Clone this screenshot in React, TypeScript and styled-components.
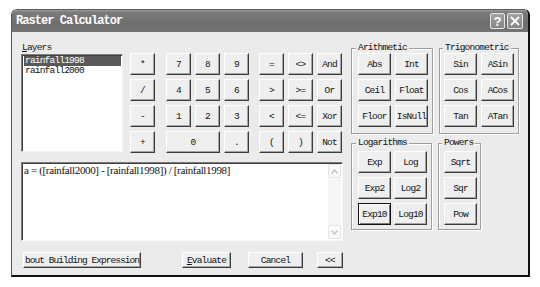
import React from "react";
import styled, { createGlobalStyle, css } from "styled-components";

const mono = `"Liberation Mono", "DejaVu Sans Mono", monospace`;

const Global = createGlobalStyle`
  html, body { margin: 0; padding: 0; background: #ffffff; }
  #root { width: 540px; height: 287px; overflow: hidden; }
  * { box-sizing: border-box; }
`;

const Window = styled.div`
  margin: 9px 0 0 11px;
  width: 519px;
  height: 268px;
  display: flex;
  flex-direction: column;
  border: 1px solid #5a5a5a;
  border-right: 2px solid #111;
  border-bottom: 2px solid #111;
  border-radius: 6px 6px 0 0;
  overflow: hidden;
  background: #ebebeb;
`;

const TitleBar = styled.div`
  height: 22px;
  flex: none;
  display: flex;
  align-items: center;
  justify-content: space-between;
  padding: 0 5px 0 4px;
  background: linear-gradient(#a0a0a0 0px, #7c7c7c 2px, #6e6e6e 60%, #747474 100%);
`;

const Title = styled.span`
  font-family: ${mono};
  font-weight: bold;
  font-size: 12px;
  letter-spacing: -0.95px;
  color: #fff;
  white-space: pre;
`;

const TitleButtons = styled.div`
  display: flex;
  gap: 2px;
`;

const TitleButton = styled.div<{ $w: number }>`
  width: ${(p) => p.$w}px;
  height: 16px;
  border: 1px solid #e6e6e6;
  border-radius: 2px;
  background: linear-gradient(#a2a2a2, #868686);
  display: flex;
  align-items: center;
  justify-content: center;
  color: #fff;
  font-family: "Liberation Sans", Arial, sans-serif;
  font-weight: bold;
  font-size: 13px;
  line-height: 1;
`;

const Body = styled.div`
  flex: 1;
  display: flex;
  gap: 8px;
  padding: 10px 9px 0 9px;
`;

const LeftColumn = styled.div`
  width: 322px;
  display: flex;
  flex-direction: column;
`;

const TopRow = styled.div`
  display: flex;
  height: 111px;
`;

const LayersPane = styled.div`
  width: 102px;
  display: flex;
  flex-direction: column;
`;

const Label = styled.div`
  height: 12px;
  font-family: ${mono};
  font-size: 9.5px;
  letter-spacing: -0.8px;
  line-height: 11px;
  color: #111;
  padding-left: 1px;
  u { text-decoration: underline; }
`;

const ListBox = styled.div`
  height: 98px;
  background: #fff;
  border: 1px solid;
  border-color: #808080 #f4f4f4 #f4f4f4 #808080;
  box-shadow: inset 1px 1px 0 #404040;
  padding: 1px 1px 0 2px;
  display: flex;
  flex-direction: column;
`;

const ListItem = styled.div<{ $selected?: boolean }>`
  height: 10px;
  line-height: 10px;
  font-family: ${mono};
  font-size: 9.5px;
  letter-spacing: -0.8px;
  padding-left: 1px;
  color: ${(p) => (p.$selected ? "#fff" : "#111")};
  background: ${(p) => (p.$selected ? "#595959" : "transparent")};
`;

const Keypad = styled.div`
  display: flex;
  gap: 10px;
  margin: 11px 0 0 7px;
`;

const KeyGrid = styled.div<{ $cols: number; $extra?: number }>`
  display: grid;
  grid-template-columns: repeat(${(p) => p.$cols}, 25px);
  grid-auto-rows: 22px;
  gap: 4px;
  margin-right: ${(p) => p.$extra ?? 0}px;
`;

const Btn = styled.button<{ $span?: number; $focused?: boolean }>`
  margin: 0;
  padding: 0;
  font-family: ${mono};
  font-size: 9.5px;
  letter-spacing: -0.8px;
  color: #111;
  background: #efefef;
  border: 1px solid;
  border-color: #ffffff #3c3c3c #3c3c3c #ffffff;
  box-shadow: inset -1px -1px 0 #a4a4a4;
  display: flex;
  align-items: center;
  justify-content: center;
  white-space: pre;
  ${(p) => p.$span && css`grid-column: span ${p.$span};`}
  ${(p) =>
    p.$focused &&
    css`
      border-color: #111;
      box-shadow: inset 1px 1px 0 #fff, inset -1px -1px 0 #7a7a7a;
    `}
  u { text-decoration: underline; }
`;

const Expression = styled.div`
  margin-top: 9px;
  height: 79px;
  display: flex;
  background: #fff;
  border: 1px solid;
  border-color: #7a7a7a #f8f8f8 #f8f8f8 #7a7a7a;
  box-shadow: inset 1px 1px 0 #404040;
`;

const ExprText = styled.div`
  flex: 1;
  padding: 1px 0 0 2px;
  font-family: "Liberation Serif", "Times New Roman", serif;
  font-size: 11px;
  letter-spacing: -0.35px;
  line-height: 13px;
  color: #111;
  white-space: pre;
`;

const Scrollbar = styled.div`
  width: 13px;
  margin: 1px 1px 1px 0;
  display: flex;
  flex-direction: column;
  justify-content: space-between;
  background: #f6f6f6;
`;

const ScrollArrow = styled.div`
  height: 14px;
  border: 1px solid #e4e4e4;
  border-radius: 2px;
  background: #fafafa;
  display: flex;
  align-items: center;
  justify-content: center;
`;

const BottomRow = styled.div`
  margin-top: 11px;
  height: 16px;
  display: flex;
`;

const FooterBtn = styled(Btn)<{ $w: number; $ml: number; $left?: boolean }>`
  width: ${(p) => p.$w}px;
  height: 16px;
  margin-left: ${(p) => p.$ml}px;
  justify-content: ${(p) => (p.$left ? "flex-start" : "center")};
  padding-left: ${(p) => (p.$left ? 1 : 0)}px;
  letter-spacing: ${(p) => (p.$left ? "-0.95px" : "-0.8px")};
  overflow: hidden;
`;

const RightColumn = styled.div`
  width: 168px;
  display: flex;
  flex-direction: column;
  gap: 9px;
  padding-top: 6px;
`;

const GroupRow = styled.div`
  display: flex;
  gap: 6px;
`;

const Group = styled.div<{ $w: number; $h: number; $pl: number; $pt: number; $cols: number; $cw: number; $gap: number }>`
  position: relative;
  width: ${(p) => p.$w}px;
  height: ${(p) => p.$h}px;
  border: 1px solid #9e9e9e;
  box-shadow: 1px 1px 0 #ffffff, inset 1px 1px 0 #ffffff;
  padding: ${(p) => p.$pt}px 0 0 ${(p) => p.$pl}px;
  display: grid;
  grid-template-columns: repeat(${(p) => p.$cols}, ${(p) => p.$cw}px);
  grid-auto-rows: 22px;
  column-gap: ${(p) => p.$gap}px;
  row-gap: 4px;
  align-content: start;
`;

const Legend = styled.span<{ $left: number }>`
  position: absolute;
  top: -6px;
  left: ${(p) => p.$left}px;
  padding: 0 2px;
  background: #ebebeb;
  font-family: ${mono};
  font-size: 9.5px;
  letter-spacing: -0.8px;
  line-height: 10px;
  color: #111;
  white-space: pre;
`;

const Chevron = ({ up }: { up?: boolean }) => (
  <svg width="7" height="5" viewBox="0 0 7 5">
    <polyline
      points={up ? "0.5,4.5 3.5,1 6.5,4.5" : "0.5,0.5 3.5,4 6.5,0.5"}
      fill="none"
      stroke="#c4c4c4"
      strokeWidth="1.4"
    />
  </svg>
);

const ops = ["*", "/", "-", "+"];

export default function App() {
  return (
    <>
      <Global />
      <Window>
        <TitleBar>
          <Title>Raster Calculator</Title>
          <TitleButtons>
            <TitleButton $w={15}>?</TitleButton>
            <TitleButton $w={16}>
              <svg width="10" height="10" viewBox="0 0 10 10">
                <path d="M1 1 L9 9 M9 1 L1 9" stroke="#fff" strokeWidth="1.8" />
              </svg>
            </TitleButton>
          </TitleButtons>
        </TitleBar>
        <Body>
          <LeftColumn>
            <TopRow>
              <LayersPane>
                <Label>
                  <u>L</u>ayers
                </Label>
                <ListBox>
                  <ListItem $selected>rainfall1998</ListItem>
                  <ListItem>rainfall2000</ListItem>
                </ListBox>
              </LayersPane>
              <Keypad>
                <KeyGrid $cols={1} $extra={1}>
                  {ops.map((o) => (
                    <Btn key={o}>{o}</Btn>
                  ))}
                </KeyGrid>
                <KeyGrid $cols={3}>
                  {["7", "8", "9", "4", "5", "6", "1", "2", "3"].map((k) => (
                    <Btn key={k}>{k}</Btn>
                  ))}
                  <Btn $span={2}>0</Btn>
                  <Btn>.</Btn>
                </KeyGrid>
                <KeyGrid $cols={3}>
                  {["=", "<>", "And", ">", ">=", "Or", "<", "<=", "Xor", "(", ")", "Not"].map((k) => (
                    <Btn key={k}>{k}</Btn>
                  ))}
                </KeyGrid>
              </Keypad>
            </TopRow>
            <Expression>
              <ExprText>a = ([rainfall2000] - [rainfall1998]) / [rainfall1998]</ExprText>
              <Scrollbar>
                <ScrollArrow>
                  <Chevron up />
                </ScrollArrow>
                <ScrollArrow>
                  <Chevron />
                </ScrollArrow>
              </Scrollbar>
            </Expression>
            <BottomRow>
              <FooterBtn $w={118} $ml={2} $left>
                bout Building Expression
              </FooterBtn>
              <FooterBtn $w={49} $ml={41}>
                <span>
                  <u>E</u>valuate
                </span>
              </FooterBtn>
              <FooterBtn $w={55} $ml={17}>Cancel</FooterBtn>
              <FooterBtn $w={26} $ml={14}>&lt;&lt;</FooterBtn>
            </BottomRow>
          </LeftColumn>
          <RightColumn>
            <GroupRow>
              <Group $w={82} $h={86} $pl={6} $pt={4} $cols={2} $cw={33} $gap={4}>
                <Legend $left={4}>Arithmetic</Legend>
                {["Abs", "Int", "Ceil", "Float", "Floor", "IsNull"].map((k) => (
                  <Btn key={k}>{k}</Btn>
                ))}
              </Group>
              <Group $w={80} $h={86} $pl={4} $pt={4} $cols={2} $cw={33} $gap={4}>
                <Legend $left={3}>Trigonometric</Legend>
                {["Sin", "ASin", "Cos", "ACos", "Tan", "ATan"].map((k) => (
                  <Btn key={k}>{k}</Btn>
                ))}
              </Group>
            </GroupRow>
            <GroupRow>
              <Group $w={81} $h={87} $pl={6} $pt={7} $cols={2} $cw={33} $gap={3}>
                <Legend $left={4}>Logarithms</Legend>
                {["Exp", "Log", "Exp2", "Log2"].map((k) => (
                  <Btn key={k}>{k}</Btn>
                ))}
                <Btn $focused>Exp10</Btn>
                <Btn>Log10</Btn>
              </Group>
              <Group $w={43} $h={87} $pl={5} $pt={7} $cols={1} $cw={33} $gap={0}>
                <Legend $left={3}>Powers</Legend>
                {["Sqrt", "Sqr", "Pow"].map((k) => (
                  <Btn key={k}>{k}</Btn>
                ))}
              </Group>
            </GroupRow>
          </RightColumn>
        </Body>
      </Window>
    </>
  );
}
